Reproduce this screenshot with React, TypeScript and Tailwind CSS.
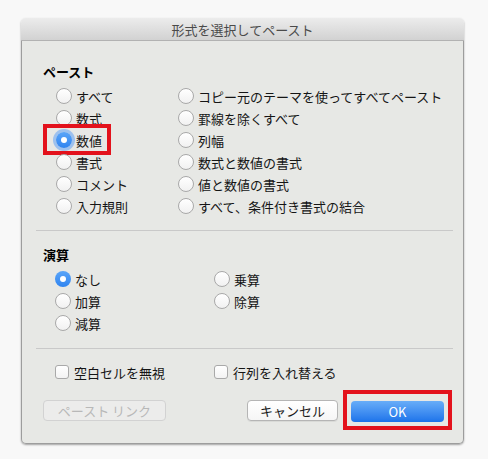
import React from "react";

const font = { fontFamily: '"Noto Sans CJK JP", "Noto Sans", sans-serif' };

function Radio({ checked, focus }: { checked?: boolean; focus?: boolean }) {
  if (checked) {
    return (
      <span
        className={`flex h-[16px] w-[16px] shrink-0 items-center justify-center rounded-full bg-gradient-to-b from-[#5aa5f8] to-[#2f84f0] ${
          focus ? "shadow-[0_0_0_3px_rgba(96,160,245,0.55)]" : ""
        }`}
      >
        <span className="h-[6px] w-[6px] rounded-full bg-white" />
      </span>
    );
  }
  return (
    <span className="h-[16px] w-[16px] shrink-0 rounded-full border border-[#a9a9a9] bg-gradient-to-b from-white to-[#f1f1f1]" />
  );
}

function RadioRow({
  label,
  checked,
  focus,
  marked,
}: {
  label: string;
  checked?: boolean;
  focus?: boolean;
  marked?: boolean;
}) {
  return (
    <div className="relative flex h-[22px] items-center gap-[4px]">
      <Radio checked={checked} focus={focus} />
      <span className="text-[13px] leading-none text-[#151515]">{label}</span>
      {marked && (
        <span className="absolute left-[-13px] top-[-5px] h-[31px] w-[68px] border-[4px] border-[#e3121c]" />
      )}
    </div>
  );
}

function Checkbox({ label }: { label: string }) {
  return (
    <div className="flex h-[22px] items-center gap-[5px]">
      <span className="h-[14px] w-[14px] shrink-0 rounded-[3px] border border-[#a9a9a9] bg-gradient-to-b from-white to-[#f3f3f3]" />
      <span className="text-[13px] leading-none text-[#151515]">{label}</span>
    </div>
  );
}

export default function App() {
  const pasteLeft = ["すべて", "数式", "数値", "書式", "コメント", "入力規則"];
  const pasteRight = [
    "コピー元のテーマを使ってすべてペースト",
    "罫線を除くすべて",
    "列幅",
    "数式と数値の書式",
    "値と数値の書式",
    "すべて、条件付き書式の結合",
  ];

  return (
    <div className="min-h-[459px] w-[488px] bg-[#f8f8f8] pl-[21px] pt-[18px]" style={font}>
      <div className="flex w-[443px] flex-col rounded-[5px] shadow-[0_1px_2px_rgba(0,0,0,0.35)]">
        {/* タイトルバー */}
        <div className="flex h-[23px] items-center justify-center rounded-t-[5px] border-b border-[#b2b2b2] bg-gradient-to-b from-[#ececec] to-[#d2d2d2]">
          <span className="text-[13px] leading-none text-[#4a4a4a]">形式を選択してペースト</span>
        </div>

        <div className="flex flex-col rounded-b-[5px] border-x border-b border-[#9d9d9d] bg-[#e7e8e5] pb-[21px] pl-[21px] pr-[19px] pt-[23px]">
          {/* ペースト */}
          <div className="h-[16px] text-[13px] font-bold leading-[16px] text-black">ペースト</div>
          <div className="ml-[13px] mt-[5px] grid grid-cols-[122px_1fr]">
            <div className="flex flex-col">
              {pasteLeft.map((l) => (
                <RadioRow
                  key={l}
                  label={l}
                  checked={l === "数値"}
                  focus={l === "数値"}
                  marked={l === "数値"}
                />
              ))}
            </div>
            <div className="flex flex-col">
              {pasteRight.map((l) => (
                <RadioRow key={l} label={l} />
              ))}
            </div>
          </div>

          <div className="-ml-[7px] mt-[13px] h-px w-[417px] bg-[#c9c9c9]" />

          {/* 演算 */}
          <div className="mt-[16px] h-[16px] text-[13px] font-bold leading-[16px] text-black">演算</div>
          <div className="ml-[12px] mt-[5px] grid grid-cols-[159px_1fr]">
            <div className="flex flex-col">
              <RadioRow label="なし" checked />
              <RadioRow label="加算" />
              <RadioRow label="減算" />
            </div>
            <div className="flex flex-col">
              <RadioRow label="乗算" />
              <RadioRow label="除算" />
            </div>
          </div>

          <div className="-ml-[7px] mt-[14px] h-px w-[417px] bg-[#c9c9c9]" />

          <div className="ml-[12px] mt-[12px] grid grid-cols-[159px_1fr]">
            <Checkbox label="空白セルを無視" />
            <Checkbox label="行列を入れ替える" />
          </div>

          {/* ボタン */}
          <div className="mt-[15px] flex items-center justify-between">
            <button className="h-[21px] w-[123px] rounded-[4px] border border-[#d2d2d2] bg-[#ececeb] text-[13px] leading-none text-[#b8b8b8]">
              ペースト リンク
            </button>
            <div className="flex items-center gap-[13px]">
              <button className="h-[21px] w-[91px] rounded-[4px] border border-[#b5b5b5] bg-gradient-to-b from-white to-[#f6f6f6] text-[13px] leading-none text-[#1a1a1a] shadow-[0_1px_0_rgba(0,0,0,0.06)]">
                キャンセル
              </button>
              <div className="relative">
                <button className="h-[21px] w-[93px] rounded-[4px] bg-gradient-to-b from-[#68adf8] to-[#1b73ea] text-[13px] leading-none text-white">
                  OK
                </button>
                <span className="absolute -inset-[8px] border-[4px] border-[#e3121c]" />
              </div>
            </div>
          </div>
        </div>
      </div>
    </div>
  );
}
